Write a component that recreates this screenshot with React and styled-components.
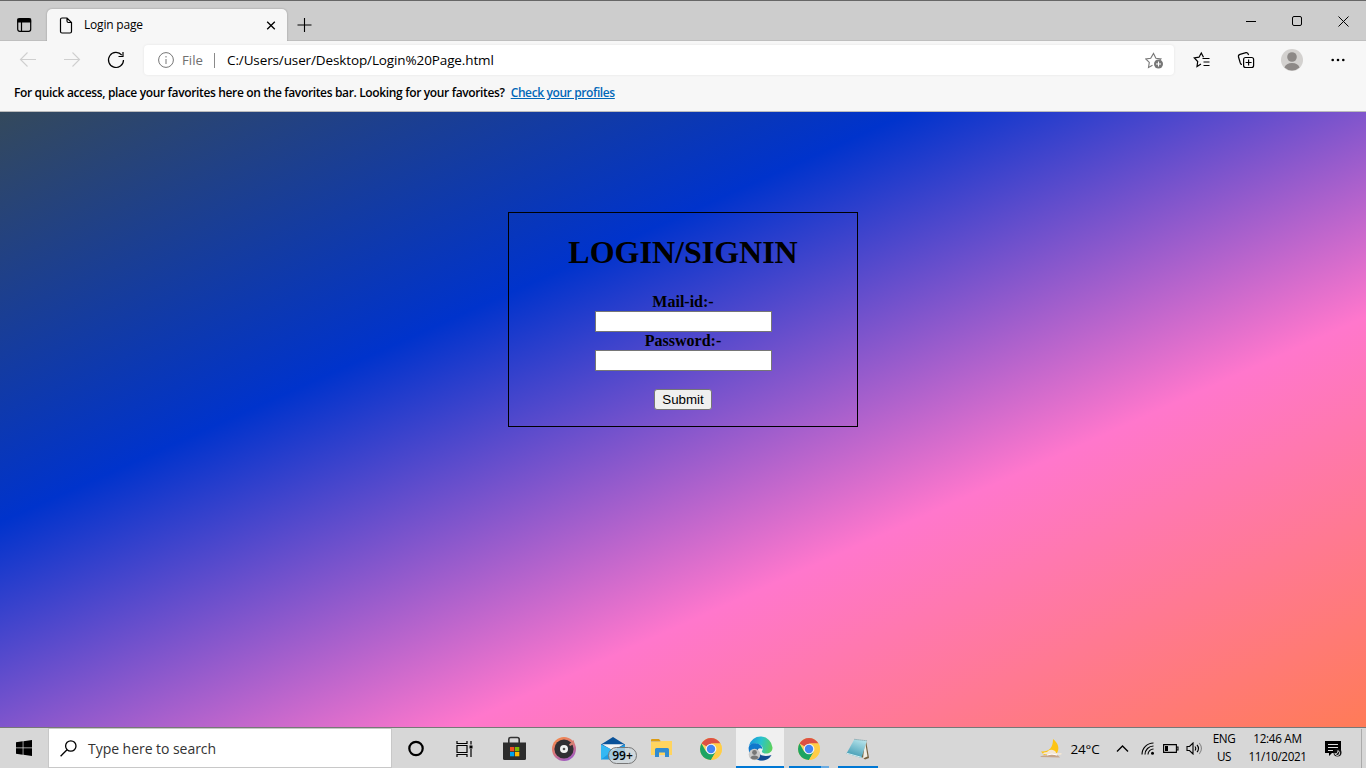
import React from "react";
import styled, { createGlobalStyle } from "styled-components";

const Global = createGlobalStyle`
  * { box-sizing: border-box; }
  body { margin: 0; overflow: hidden; }
  svg { display: block; flex: none; }
`;

const UI = `"Open Sans", "Noto Sans", sans-serif`;

const Screen = styled.div`
  width: 1366px;
  height: 768px;
  display: flex;
  flex-direction: column;
  font-family: ${UI};
  color: #000;
`;

const Label = styled.span`
  font-size: ${(p) => p.$size || 12}px;
  font-weight: ${(p) => p.$weight || 400};
  letter-spacing: ${(p) => p.$track || 0}px;
  color: ${(p) => p.$color || "#000"};
  line-height: 18px;
  white-space: nowrap;
`;

const TitleBar = styled.header`
  height: 41px;
  flex: none;
  display: flex;
  align-items: flex-end;
  background: #cdcdcd;
  border-top: 1px solid #666;
  box-shadow: inset 0 -1px #bfbfbf;
`;

const TabActions = styled.div`
  width: 47px;
  height: 32px;
  display: flex;
  align-items: center;
  padding-left: 17px;
`;

const Tab = styled.div`
  width: 240px;
  height: 32px;
  display: flex;
  align-items: center;
  padding: 0 11px 0 12px;
  background: #f7f7f7;
  border-radius: 5px 5px 0 0;
  box-shadow: 0 0 2px rgba(0, 0, 0, 0.3);
  clip-path: inset(-3px -3px 0 -3px);
`;

const TabTitle = styled(Label)`
  flex: 1;
  margin-left: 11px;
`;

const NewTab = styled.div`
  height: 32px;
  display: flex;
  align-items: center;
  margin-left: 10px;
`;

const WindowControls = styled.div`
  margin-left: auto;
  height: 40px;
  display: flex;
`;

const WindowButton = styled.div`
  width: 46px;
  display: grid;
  place-items: center;
`;

const Toolbar = styled.nav`
  height: 38px;
  flex: none;
  display: flex;
  align-items: center;
  background: #f7f7f7;
`;

const NavButtons = styled.div`
  width: 144px;
  display: flex;
  gap: 24px;
  padding-left: 18px;
`;

const AddressBar = styled.div`
  width: 1030px;
  height: 30px;
  display: flex;
  align-items: center;
  padding: 0 9px 0 14px;
  background: #fff;
  border-radius: 4px;
  box-shadow: 0 0 3px rgba(0, 0, 0, 0.08);
`;

const Scheme = styled(Label)`
  width: 32px;
  margin-left: 8px;
`;

const Address = styled(Label)`
  flex: 1;
  margin-left: 12px;
`;

const Divider = styled.span`
  width: 1px;
  height: 15px;
  background: #8a8a8a;
`;

const ToolbarActions = styled.div`
  display: flex;
  padding-left: 5px;
`;

const ToolbarButton = styled.div`
  width: ${(p) => p.$width || 46}px;
  display: grid;
  place-items: center;
`;

const FavoritesBar = styled.div`
  height: 33px;
  flex: none;
  display: flex;
  align-items: center;
  padding: 0 14px 4px;
  gap: 6px;
  background: #f7f7f7;
  border-bottom: 1px solid #bcbcbc;
`;

const ProfileLink = styled(Label)`
  text-decoration: underline;
  text-underline-offset: 1px;
`;

const Page = styled.main`
  height: 615px;
  flex: none;
  display: flex;
  justify-content: center;
  padding-top: 100px;
  font-family: "Liberation Serif", serif;
  background: linear-gradient(to bottom right, #34495c, #0033cc, #ff77cc, #ff7b57);
`;

const LoginForm = styled.form`
  width: 350px;
  height: 215px;
  border: 1px solid #000;
  display: flex;
  flex-direction: column;
  align-items: center;
`;

const Heading = styled.h1`
  margin: 21px 0 22px;
  font-size: 32px;
  line-height: 37px;
  font-weight: bold;
`;

const FieldLabel = styled.label`
  height: 18px;
  font-size: 16px;
  line-height: 18px;
  font-weight: bold;
`;

const Field = styled.input`
  width: 177px;
  height: 21px;
  margin: 0;
  border: 1px solid #767676;
  background: #fff;
`;

const Submit = styled.button`
  width: 58px;
  height: 21px;
  margin-top: 18px;
  padding: 0;
  border: 1px solid #767676;
  border-radius: 3px;
  background: #efefef;
  color: #000;
  font: 13.333px/17px "Liberation Sans", sans-serif;
`;

const Taskbar = styled.footer`
  height: 41px;
  flex: none;
  display: flex;
  background: #d7d7d7;
  border-top: 1px solid #777;
`;

const Start = styled.div`
  width: 48px;
  display: grid;
  place-items: center;
`;

const SearchBox = styled.div`
  width: 344px;
  display: flex;
  align-items: center;
  gap: 11px;
  padding-left: 11px;
  background: #fff;
  border: 1px solid #c8c8c8;
`;

const SearchHint = styled(Label)`
  padding-top: 2px;
`;

const AppCell = styled.div`
  width: ${(p) => p.$width || 49}px;
  margin-left: ${(p) => p.$gap || 0}px;
  padding-top: 1px;
  position: relative;
  display: grid;
  place-items: center;
  background: ${(p) => (p.$active ? "#f0f0f0" : "transparent")};
`;

const Underline = styled.span`
  position: absolute;
  bottom: 0;
  left: ${(p) => p.$left}px;
  width: ${(p) => p.$width}px;
  height: 2px;
  background: ${(p) => p.$color || "#0078d4"};
`;

const Badge = styled.span`
  position: absolute;
  left: 20px;
  top: 19px;
  width: 29px;
  height: 17px;
  border: 1px solid #777;
  border-radius: 9px;
  background: rgba(205, 215, 220, 0.75);
  font-size: 12px;
  line-height: 15px;
  font-weight: 600;
  text-align: center;
`;

const Tray = styled.div`
  margin-left: auto;
  display: flex;
  padding-top: 1px;
`;

const TrayCell = styled.div`
  width: ${(p) => p.$width}px;
  display: flex;
  flex-direction: column;
  align-items: center;
  justify-content: center;
`;

const TrayLine = styled(Label)`
  line-height: 17.5px;
  position: relative;
  top: -1px;
`;

const ShowDesktop = styled.div`
  width: 5px;
  margin-left: 6px;
  border-left: 1px solid #aaa;
`;

const Icon = ({ w = 16, h = w, box, sw = 1, color = "#000", children }) => (
  <svg width={w} height={h} viewBox={box || `0 0 ${w} ${h}`} fill="none" stroke={color} strokeWidth={sw}>
    {children}
  </svg>
);

const Chrome = () => (
  <Icon w={22} sw={0}>
    <circle cx="11" cy="11" r="11" fill="#fdd663" />
    <path d="M11 11L1.500 5.500A11 11 0 0 1 20.500 5.500H11z" fill="#dd5144" />
    <path d="M1.500 5.500A11 11 0 0 0 11 22l4.800-8.200L11 11 6.200 13.800z" fill="#1da462" />
    <path d="M20.500 5.500A11 11 0 0 1 11 22l4.800-8.200A5.500 5.500 0 0 0 11 5.500z" fill="#ffcd46" />
    <circle cx="11" cy="11" r="5.300" fill="#f4f4f4" />
    <circle cx="11" cy="11" r="4.200" fill="#4285f4" />
  </Icon>
);

const Store = () => (
  <Icon w={24} h={25} sw={0}>
    <path d="M6.800 7V3.500q0-2 2-2h6.400q2 0 2 2V7" stroke="#333" strokeWidth="1.600" />
    <path d="M1 6.500h23v16q0 1.500-1.500 1.500h-20Q1 24 1 22.500z" fill="#2d2d2d" />
    <path d="M8 11h4.300v4.300H8z" fill="#f25022" />
    <path d="M13 11h4.300v4.300H13z" fill="#7fba00" />
    <path d="M8 16h4.300v4.300H8z" fill="#00a4ef" />
    <path d="M13 16h4.300v4.300H13z" fill="#ffb900" />
  </Icon>
);

const Groove = () => (
  <Icon w={24} sw={0}>
    <defs>
      <linearGradient id="ring" x1="0.2" y1="0" x2="0.7" y2="1">
        <stop offset="0" stopColor="#f58a4a" />
        <stop offset="0.5" stopColor="#d9777c" />
        <stop offset="1" stopColor="#9a58c8" />
      </linearGradient>
    </defs>
    <circle cx="12" cy="12" r="12" fill="url(#ring)" />
    <circle cx="12" cy="12" r="9.600" fill="#302f33" />
    <path d="M17 7.500L22 3v4l-4 2z" fill="#d58074" />
    <circle cx="12" cy="12" r="4" fill="#f2f2f2" />
    <circle cx="12" cy="12" r="1.300" fill="#555" />
  </Icon>
);

const Mail = () => (
  <Icon w={24} h={23} sw={0}>
    <path d="M0 7.500L12 0l12 7.500V12H0z" fill="#0a5299" />
    <path d="M0 7.500l12 5.500 12-5.500v15H0z" fill="#1f9ce4" />
    <path d="M1 7.200h22L12 13.500z" fill="#f5f5f5" />
    <path d="M0 7.500l12 6L0 22.500z" fill="#35b8f3" />
  </Icon>
);

const Explorer = () => (
  <Icon w={22} h={19} sw={0}>
    <path d="M0 1q0-1 1-1h7l2 2.500H0z" fill="#dc9b12" />
    <path d="M0 3h9l1-1h11v14H0z" fill="#ffd45f" />
    <path d="M4 18v-7.500Q4 9 5.500 9h11Q18 9 18 10.500V18h-4v-4.500H8V18z" fill="#318bd0" />
  </Icon>
);

const Edge = () => (
  <Icon w={25} sw={0}>
    <defs>
      <linearGradient id="swirl" x1="0" y1="0.3" x2="1" y2="0.5">
        <stop offset="0" stopColor="#1694df" />
        <stop offset="0.5" stopColor="#29c3cc" />
        <stop offset="1" stopColor="#5bd15c" />
      </linearGradient>
    </defs>
    <path d="M.8 10A12 12 0 0 1 24.500 11.500c0 4-3 6-6.500 6-3 0-4.500-1.300-4-2.500 1.300-1.700 1-4.500-1.500-6C8.500 6.700 3 7 .8 10z" fill="url(#swirl)" />
    <path d="M.6 12C1 8 5 6.500 9 7.500c3.500.8 5.500 3.300 5.300 5.500C11 11 8.500 14 9 17.500c.6 4 5.500 6 10.500 4.500A12 12 0 0 1 .6 12z" fill="#0f78cc" />
    <path d="M10 12c-1.500 7 6 9.500 13.500 7-2.500 5-8 6.300-12.500 5.300-3.500-2.300-4.500-8-1-12.300z" fill="#124a91" />
    <circle cx="6.500" cy="18.500" r="5.800" fill="#c9c9c9" />
    <circle cx="6.500" cy="16.500" r="2.400" fill="#777" />
    <path d="M2.500 22q.3-2.500 4-2.500t4 2.500a5.800 5.800 0 0 1-8 0z" fill="#777" />
  </Icon>
);

const Notepad = () => (
  <Icon w={24} h={22} sw={0}>
    <defs>
      <linearGradient id="paper" x1="0.7" y1="0" x2="0.3" y2="1">
        <stop offset="0" stopColor="#b8e5ec" />
        <stop offset="1" stopColor="#3a97b0" />
      </linearGradient>
    </defs>
    <path d="M20 2.500l3 17.500-4 1.500-5-4z" fill="#75603d" />
    <path d="M19 3l2.500 15.500-4.500 2z" fill="#f1eee3" />
    <path d="M8.500 1L21 2.500 15.500 20 .5 15.500z" fill="url(#paper)" />
    <path d="M8.500 1.300L21 2.800" stroke="#7c8f94" strokeWidth="1" strokeDasharray="1 1" />
    <path d="M1 15.300l14.300 4" stroke="#d2edf1" strokeWidth="1" />
  </Icon>
);

const Weather = () => (
  <Icon w={23} h={20} sw={0}>
    <path d="M13 0c5 4 7 9 4 14L4 16 1 12.500c8 .5 12-3.500 12-12.500z" fill="#fdc414" />
    <path d="M3 15q0-2 4-2 3-4 8-1 1 1 1 2h5q2 1-1 2z" fill="#f3e6d5" />
    <path d="M0 18q1-2 6-1.500l5-1 7 1 2 2z" fill="#c7a58b" />
    <path d="M7 16q5-2 10 0" stroke="#fff" strokeWidth="1" />
  </Icon>
);

export default function App() {
  return (
    <Screen>
      <Global />
      <TitleBar>
        <TabActions>
          <Icon w={15} h={14} sw={1.2}>
            <rect x="0.700" y="0.700" width="13" height="12.600" rx="2" />
            <path d="M1 1h12.500v3H1z" fill="#000" />
            <path d="M4.500 4v9" />
          </Icon>
        </TabActions>
        <Tab>
          <Icon w={14} h={17} sw={1.2}>
            <path d="M3 1h5l4.500 4.500V14.500q0 1.500-1.500 1.500H3q-1.500 0-1.500-1.500v-12Q1.500 1 3 1zM8 1v3q0 1.500 1.500 1.500h3" />
          </Icon>
          <TabTitle $track={-0.2}>Login page</TabTitle>
          <Icon w={10} sw={1.3}><path d="M1.200 1.700l7.600 7.600M8.800 1.700L1.200 9.300" /></Icon>
        </Tab>
        <NewTab>
          <Icon w={15} sw={1.1}><path d="M7.500 0v14M.5 7h14" /></Icon>
        </NewTab>
        <WindowControls>
          <WindowButton><Icon w={10} h={11}><path d="M0 5.500h10" /></Icon></WindowButton>
          <WindowButton><Icon w={11}><rect x="0.500" y="0.500" width="9" height="9" rx="1.500" /></Icon></WindowButton>
          <WindowButton><Icon w={11}><path d="M.5.5l10 10M10.500.5l-10 10" /></Icon></WindowButton>
        </WindowControls>
      </TitleBar>

      <Toolbar>
        <NavButtons>
          <Icon w={20} color="#cfcfcf" sw={1.1}><path d="M18 9.500H2.500M9.500 2.500L2.500 9.500l7 7" /></Icon>
          <Icon w={20} color="#cfcfcf" sw={1.1}><path d="M2 9.500h15.500M10.500 2.500l7 7-7 7" /></Icon>
          <Icon w={20} sw={1.2}><path d="M17.500 10a7.500 7.500 0 1 1-1.700-4.800M17 2v4.500h-4.500" /></Icon>
        </NavButtons>
        <AddressBar>
          <Icon w={16} color="#767676">
            <circle cx="8" cy="8" r="7.400" />
            <path d="M8 7v5M8 4v1.500" />
          </Icon>
          <Scheme $size={13.2} $color="#707070">File</Scheme>
          <Divider />
          <Address $size={13.5} $track={-0.12}>C:/Users/user/Desktop/Login%20Page.html</Address>
          <Icon w={20} h={18} color="#777" sw={1.1}>
            <path d="M7.500 14.200l-4 2.200.8-5-3.500-3.500 4.900-.7L8.500 2.500l2.400 4.700 5 .7-1.200 1.200" />
            <circle cx="13.500" cy="13" r="4.500" fill="#777" stroke="none" />
            <path d="M13.500 10.500v5M11 13h5" stroke="#fff" />
          </Icon>
        </AddressBar>
        <ToolbarActions>
          <ToolbarButton>
            <Icon w={18} sw={1.2}>
              <path d="M8 13l-4 2.500.7-5L1.300 7l4.700-.8L8.300 2l2.200 4.200" />
              <path d="M9.500 7.500h7M10.500 11h6M10.500 14.500h6" />
            </Icon>
          </ToolbarButton>
          <ToolbarButton $width={42}>
            <Icon w={18} sw={1.2}>
              <rect x="6.600" y="6.500" width="10" height="10" rx="2" />
              <path d="M11.600 8.500v6M8.600 11.500h6M5 13.500q-1.200 0-1.700-1.500L1.500 6Q1 4 3 3.400l6-1.800q1.900-.4 2.600 2.400" />
            </Icon>
          </ToolbarButton>
          <ToolbarButton $width={49}>
            <Icon w={22} sw={0}>
              <circle cx="11" cy="11" r="11" fill="#d3d1cf" />
              <circle cx="11" cy="8" r="4.800" fill="#8d8987" />
              <path d="M3.500 18.500Q5 14 11 14t7.500 4.500A11 11 0 0 1 3.500 18.500z" fill="#8d8987" />
            </Icon>
          </ToolbarButton>
          <ToolbarButton $width={44}>
            <Icon w={14} h={4} sw={0}>
              <circle cx="1.700" cy="2" r="1.300" fill="#000" />
              <circle cx="7" cy="2" r="1.300" fill="#000" />
              <circle cx="12.300" cy="2" r="1.300" fill="#000" />
            </Icon>
          </ToolbarButton>
        </ToolbarActions>
      </Toolbar>

      <FavoritesBar>
        <Label $weight={600} $track={-0.35}>
          For quick access, place your favorites here on the favorites bar. Looking for your favorites?
        </Label>
        <ProfileLink $weight={600} $track={-0.39} $color="#0067b8">Check your profiles</ProfileLink>
      </FavoritesBar>

      <Page>
        <LoginForm onSubmit={(e) => e.preventDefault()}>
          <Heading>LOGIN/SIGNIN</Heading>
          <FieldLabel htmlFor="mail">Mail-id:-</FieldLabel>
          <Field id="mail" type="text" />
          <FieldLabel htmlFor="password">Password:-</FieldLabel>
          <Field id="password" type="password" />
          <Submit type="submit">Submit</Submit>
        </LoginForm>
      </Page>

      <Taskbar>
        <Start>
          <Icon w={16} sw={0}>
            <path d="M0 2.300L6.700 1.300V7.600H0zM7.400 1.200L16 0v7.600H7.400zM0 8.300h6.700v6.400L0 13.700zM7.400 8.300H16V16l-8.600-1.200z" fill="#000" />
          </Icon>
        </Start>
        <SearchBox>
          <Icon w={17} sw={1.3}>
            <circle cx="10.800" cy="6" r="5.200" />
            <path d="M7 9.800L.6 16.300" />
          </Icon>
          <SearchHint $size={14} $track={-0.04} $color="#333">Type here to search</SearchHint>
        </SearchBox>
        <AppCell $width={48}>
          <Icon w={18} sw={2.2}><circle cx="9" cy="8.500" r="6.700" /></Icon>
        </AppCell>
        <AppCell $width={48}>
          <Icon w={17} h={16} sw={1.2}>
            <path d="M1 0v2.500h10V0M1 16v-2.500h10V16M1 4.500h10v7H1zM15 0v3.500M15 8v8" />
            <path d="M13.500 4.500h3v3h-3z" fill="#000" stroke="none" />
          </Icon>
        </AppCell>
        <AppCell $gap={1}><Store /></AppCell>
        <AppCell $gap={1}><Groove /></AppCell>
        <AppCell><Mail /><Badge>99+</Badge></AppCell>
        <AppCell><Explorer /></AppCell>
        <AppCell><Chrome /></AppCell>
        <AppCell $gap={1} $width={48} $active><Edge /><Underline $left={0} $width={48} /></AppCell>
        <AppCell>
          <Chrome />
          <Underline $left={5} $width={32} />
          <Underline $left={37} $width={8} $color="#69abe2" />
        </AppCell>
        <AppCell><Notepad /><Underline $left={5} $width={40} /></AppCell>
        <Tray>
          <TrayCell $width={25}><Weather /></TrayCell>
          <TrayCell $width={42}><Label $size={13.5} $track={-0.2}>24°C</Label></TrayCell>
          <TrayCell $width={33}><Icon w={13} h={8} sw={1.4}><path d="M1 6.500l5.500-5.500L12 6.500" /></Icon></TrayCell>
          <TrayCell $width={18}>
            <Icon w={14} h={13} sw={1.1}>
              <path d="M1 12.500A11.500 11.500 0 0 1 12.500 1M4 12.500A8.500 8.500 0 0 1 12.500 4M7 12.500A5.500 5.500 0 0 1 12.500 7" />
              <circle cx="11.500" cy="11.300" r="1.500" fill="#000" stroke="none" />
            </Icon>
          </TrayCell>
          <TrayCell $width={27}>
            <Icon w={16} h={9} sw={1.1}>
              <path d="M.6.6h12.800v7.800H.6zM13.500 3h1.500v3h-1.500" />
              <path d="M2 2h3v5H2z" fill="#000" stroke="none" />
            </Icon>
          </TrayCell>
          <TrayCell $width={20}>
            <Icon w={17} h={13} sw={1.1}>
              <path d="M1 4.500h2.500L7 1v11L3.500 8.500H1zM9 4.500q1.500 2 0 4M11 2.800q3 3.700 0 7.400" />
              <path d="M13.200 1q4.500 5.500 0 11" stroke="#888" />
            </Icon>
          </TrayCell>
          <TrayCell $width={40}>
            <TrayLine $size={11.7} $track={-0.4}>ENG</TrayLine>
            <TrayLine $size={11.7} $track={-0.4}>US</TrayLine>
          </TrayCell>
          <TrayCell $width={67}>
            <TrayLine $size={11.7} $track={-0.3}>12:46 AM</TrayLine>
            <TrayLine $size={11.7} $track={-0.4}>11/10/2021</TrayLine>
          </TrayCell>
          <TrayCell $width={44}>
            <Icon w={17} h={16} sw={0}>
              <path d="M0 0h16v12H7l-3 3v-3H0z" fill="#000" />
              <path d="M3 3.500h10M3 6.500h10M3 9.500h5" stroke="#ddd" strokeWidth="1" />
              <circle cx="12.500" cy="11.500" r="4" fill="#111" />
              <path d="M9.700 12.800q3.300.5 3.300-3.300 2.500 1.500 1.200 4.300-2 2-4.500-1z" fill="none" stroke="#ddd" strokeWidth="1" />
            </Icon>
          </TrayCell>
          <ShowDesktop />
        </Tray>
      </Taskbar>
    </Screen>
  );
}
